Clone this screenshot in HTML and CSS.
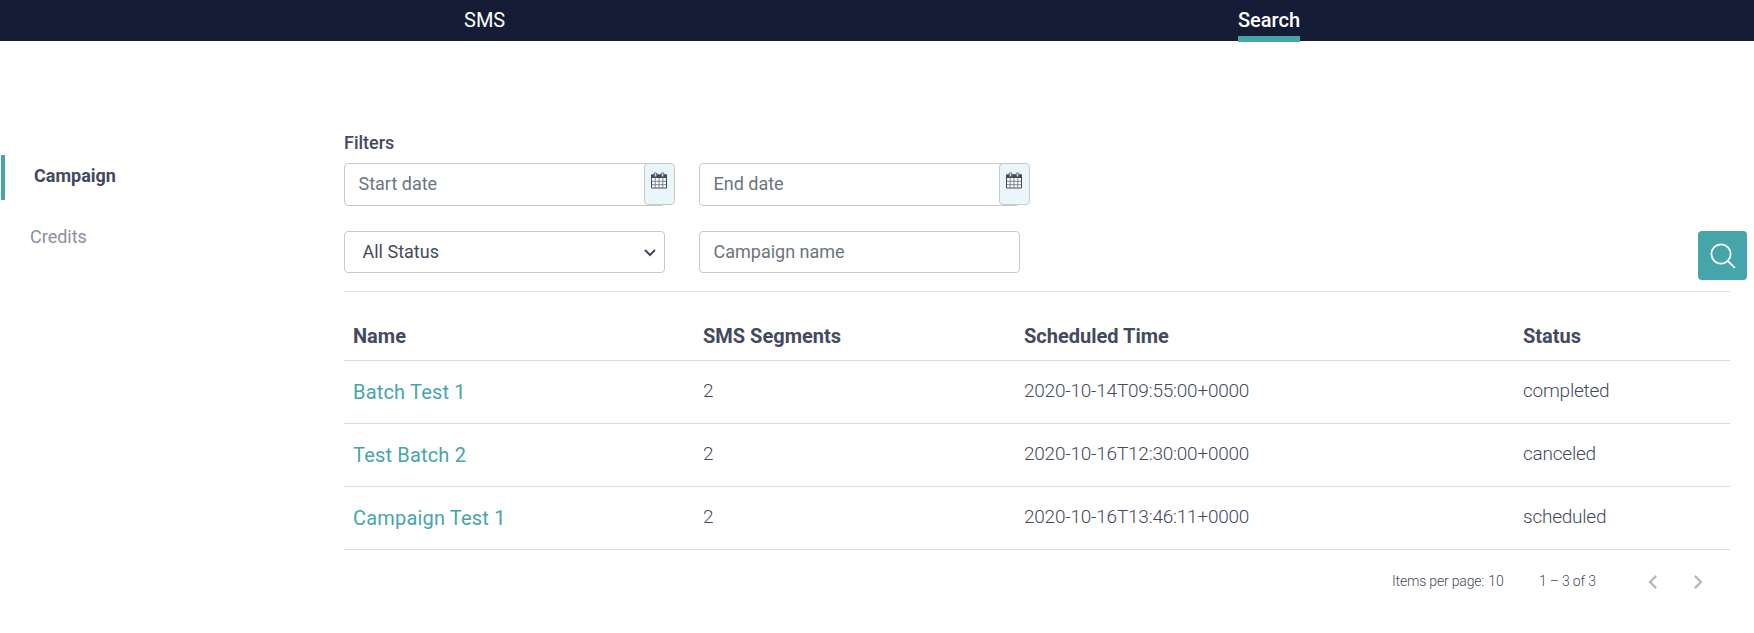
FILE: index.html
```html
<!DOCTYPE html>
<html lang="en">
<head>
<meta charset="utf-8">
<title>Campaign search</title>
<link rel="stylesheet" href="styles.css">
</head>
<body>
<nav class="topbar">
  <a class="tab tab-sms">SMS</a>
  <a class="tab tab-search active">Search</a>
</nav>
<div class="layout">
  <aside class="sidebar">
    <a class="side-link selected"><span>Campaign</span></a>
    <a class="side-link">Credits</a>
  </aside>
  <main class="content">
    <h2 class="filters-title">Filters</h2>
    <div class="filters">
      <div class="date-field">
        <div class="field tall"><span>Start date</span></div>
        <button class="calendar" aria-label="Pick start date"><svg width="16" height="17" viewBox="0 0 16 17"><path d="M.5 3h15v13H.5z" fill="#fff" stroke="#434a5e"/><path d="M0 2.5h16V6H0z" fill="#434a5e"/><path d="M4.2 6v10M8 6v10M11.8 6v10M1 9.3h14M1 12.7h14" stroke="#7c8496" fill="none"/><rect x="3.2" y=".7" width="2.6" height="4.2" rx="1.2" fill="#c4d5e8" stroke="#434a5e" stroke-width=".8"/><rect x="10.2" y=".7" width="2.6" height="4.2" rx="1.2" fill="#c4d5e8" stroke="#434a5e" stroke-width=".8"/></svg></button>
      </div>
      <div class="date-field">
        <div class="field tall"><span>End date</span></div>
        <button class="calendar" aria-label="Pick end date"><svg width="16" height="17" viewBox="0 0 16 17"><path d="M.5 3h15v13H.5z" fill="#fff" stroke="#434a5e"/><path d="M0 2.5h16V6H0z" fill="#434a5e"/><path d="M4.2 6v10M8 6v10M11.8 6v10M1 9.3h14M1 12.7h14" stroke="#7c8496" fill="none"/><rect x="3.2" y=".7" width="2.6" height="4.2" rx="1.2" fill="#c4d5e8" stroke="#434a5e" stroke-width=".8"/><rect x="10.2" y=".7" width="2.6" height="4.2" rx="1.2" fill="#c4d5e8" stroke="#434a5e" stroke-width=".8"/></svg></button>
      </div>
      <div class="field select"><span>All Status</span><svg width="12" height="8" viewBox="0 0 12 8"><path d="M1 1l5 5 5-5" fill="none" stroke="#434a5e" stroke-width="2"/></svg></div>
      <div class="field"><span>Campaign name</span></div>
      <button class="search" aria-label="Search"><svg width="26" height="26" viewBox="0 0 26 26" fill="none" stroke="#fff" stroke-width="1.8"><circle cx="11" cy="11" r="9.6"/><path d="M17.8 17.8l7 7"/></svg></button>
    </div>
    <table class="results">
      <colgroup><col class="c-name"><col class="c-seg"><col class="c-time"><col></colgroup>
      <thead><tr><th>Name</th><th>SMS Segments</th><th>Scheduled Time</th><th>Status</th></tr></thead>
      <tbody>
        <tr><td><a>Batch Test 1</a></td><td>2</td><td>2020-10-14T09:55:00+0000</td><td>completed</td></tr>
        <tr><td><a>Test Batch 2</a></td><td>2</td><td>2020-10-16T12:30:00+0000</td><td>canceled</td></tr>
        <tr><td><a>Campaign Test 1</a></td><td>2</td><td>2020-10-16T13:46:11+0000</td><td>scheduled</td></tr>
      </tbody>
    </table>
    <div class="paginator">
      <span class="per-page">Items per page: <span class="size">10</span></span>
      <span class="range">1 – 3 of 3</span>
      <svg class="prev" width="28" height="28" viewBox="0 0 24 24"><path d="M15.41 7.41L14 6l-6 6 6 6 1.41-1.41L10.83 12z"/></svg>
      <svg width="28" height="28" viewBox="0 0 24 24"><path d="M10 6L8.59 7.41 13.17 12l-4.58 4.59L10 18l6-6z"/></svg>
    </div>
  </main>
</div>
</body>
</html>
```
FILE: styles.css
```css
* { box-sizing: border-box; }
body { margin: 0; background: #fff; color: #434a5e; font-family: Roboto, "Liberation Sans", sans-serif; font-size: 18px; }
.topbar { display: flex; height: 41px; padding-left: 464px; background: #151c35; color: #fff; }
.tab { height: 42px; line-height: 40px; font-size: 20px; }
.tab-sms { width: 774px; }
.active { font-weight: 500; border-bottom: 6px solid #46a5ab; }
.layout { display: flex; }
.sidebar { width: 344px; padding: 114px 0 0 1px; }
.side-link { display: block; height: 45px; line-height: 43px; padding-left: 29px; color: #8b90a0; }
.side-link + .side-link { margin-top: 15px; }
.selected { border-left: 4px solid #46a5ab; line-height: 42px; color: #434a5e; font-weight: 700; }
.content { width: 1386px; padding-top: 91px; }
.filters-title { margin: 0 0 10px; font-size: 18px; font-weight: 500; line-height: 21px; }
.filters { display: grid; grid-template-columns: 355px 355px 1fr; grid-template-rows: 43px 49px; row-gap: 25px; height: 129px; border-bottom: 1px solid #dfdfdf; }
.date-field { display: flex; }
.field { display: flex; width: 321px; height: 42px; align-items: center; border: 1px solid #c9c9c9; border-radius: 4px; padding: 0 13.5px 1px; color: #6c757d; }
.tall { height: 43px; padding-bottom: 2px; }
.calendar { display: flex; justify-content: center; width: 31px; height: 42px; margin-left: -21px; padding: 8px 1px 0 0; background: #eaf5fc; border: 1px solid #c9c9c9; border-radius: 4px; }
.select { grid-column: 1; color: #434a5e; justify-content: space-between; padding: 0 8px 1px 17.5px; }
.select svg { margin-top: 3px; }
.search { display: flex; justify-self: end; align-items: center; justify-content: center; width: 49px; height: 49px; margin-right: -17px; padding: 0; border: 0; border-radius: 4px; background: #46a5ab; }
.results { width: 100%; border-collapse: collapse; table-layout: fixed; font-size: 20px; }
.c-name { width: 350px; }
.c-seg { width: 321px; }
.c-time { width: 499px; }
.results th { height: 68px; padding: 20px 9px 0; text-align: left; font-weight: 700; border-bottom: 1px solid #dcdcdc; }
.results td { height: 63px; padding: 0 9px 2px; font-size: 19px; font-weight: 300; letter-spacing: -.23px; border-bottom: 1px solid #dcdcdc; }
.results a { position: relative; top: 1px; color: #46a5ab; font-size: 20px; font-weight: 400; letter-spacing: .18px; }
.paginator { display: flex; align-items: center; height: 64px; padding-left: 1048px; font-size: 14px; font-weight: 300; letter-spacing: -.18px; }
.per-page { width: 147px; margin-top: -1px; }
.size { margin-left: 1px; }
.range { width: 100px; margin-top: -1px; }
.paginator svg { fill: #b9b9b9; }
.prev { margin-right: 17px; }
```
